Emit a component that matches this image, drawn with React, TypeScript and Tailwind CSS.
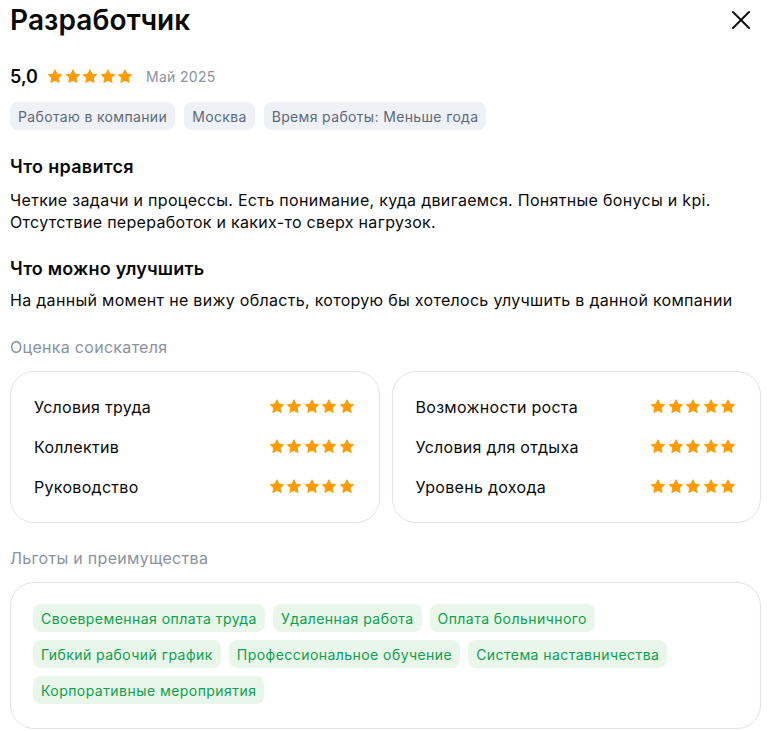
import { X } from "lucide-react";

const Star = () => (
  <svg width="16" height="15" viewBox="0 0 24 23" className="shrink-0">
    <path
      d="M12 1.2l3.1 6.6 7.2.9-5.3 5 1.4 7.1L12 17.3l-6.4 3.5 1.4-7.1-5.3-5 7.2-.9z"
      fill="#ff9a00"
      stroke="#ff9a00"
      strokeWidth="1.4"
      strokeLinejoin="round"
    />
  </svg>
);

const Stars = () => (
  <div className="flex items-center gap-[1.5px]">
    {[0, 1, 2, 3, 4].map((i) => (
      <Star key={i} />
    ))}
  </div>
);

const RatingCard = ({ rows }: { rows: string[] }) => (
  <div className="flex-1 rounded-[24px] border border-[#dfe4ec] px-[23px] pt-[24px] pb-[25px]">
    <div className="flex flex-col gap-[19px]">
      {rows.map((r) => (
        <div key={r} className="flex items-center justify-between h-[21px]">
          <span className="text-[16px] tracking-[0.3px] text-[#0a0a0a]">{r}</span>
          <div className="mr-[1px]">
            <Stars />
          </div>
        </div>
      ))}
    </div>
  </div>
);

const benefits = [
  "Своевременная оплата труда",
  "Удаленная работа",
  "Оплата больничного",
  "Гибкий рабочий график",
  "Профессиональное обучение",
  "Система наставничества",
  "Корпоративные мероприятия",
];

export default function App() {
  return (
    <div
      className="w-[771px] bg-white px-[10px] text-[#0a0a0a]"
      style={{ fontFamily: "Inter, 'Noto Sans', sans-serif" }}
    >
      {/* Header */}
      <div className="flex items-start justify-between pt-[2px]">
        <h1 className="text-[28px] font-semibold leading-[36px] tracking-[0.1px]">
          Разработчик
        </h1>
        <button className="mt-[2px] mr-[4px] text-[#111]">
          <X size={32} strokeWidth={1.5} />
        </button>
      </div>

      <div className="mt-[26px] flex items-center h-[24px]">
        <span className="text-[18px] font-semibold">5,0</span>
        <div className="ml-[9px]">
          <Stars />
        </div>
        <span className="ml-[13px] text-[14px] tracking-[0.3px] text-[#8a93a0]">Май 2025</span>
      </div>

      <div className="mt-[14px] flex gap-[9px]">
        {["Работаю в компании", "Москва", "Время работы: Меньше года"].map((t) => (
          <span
            key={t}
            className="rounded-[8px] bg-[#eef1f6] px-[8px] h-[28px] flex items-center text-[14px] tracking-[0.35px] text-[#5e6978]"
          >
            {t}
          </span>
        ))}
      </div>

      {/* Likes */}
      <h2 className="mt-[24px] text-[18px] font-semibold leading-[26px] tracking-[0.3px]">Что нравится</h2>
      <p className="mt-[9px] text-[16px] leading-[22px] tracking-[0.3px]">
        Четкие задачи и процессы. Есть понимание, куда двигаемся. Понятные бонусы и kpi.
        <br />
        Отсутствие переработок и каких-то сверх нагрузок.
      </p>

      <h2 className="mt-[23px] text-[18px] font-semibold leading-[26px] tracking-[0.2px]">
        Что можно улучшить
      </h2>
      <p className="mt-[7px] text-[16px] leading-[22px] tracking-[0.3px]">
        На данный момент не вижу область, которую бы хотелось улучшить в данной компании
      </p>

      {/* Ratings */}
      <div className="mt-[25px] text-[16px] leading-[22px] tracking-[0.3px] text-[#8a93a0]">
        Оценка соискателя
      </div>
      <div className="mt-[13px] flex gap-[12px]">
        <RatingCard rows={["Условия труда", "Коллектив", "Руководство"]} />
        <RatingCard rows={["Возможности роста", "Условия для отдыха", "Уровень дохода"]} />
      </div>

      {/* Benefits */}
      <div className="mt-[24px] text-[16px] leading-[22px] tracking-[0.3px] text-[#8a93a0]">
        Льготы и преимущества
      </div>
      <div className="mt-[13px] rounded-[24px] border border-[#dfe4ec] px-[22px] pt-[21px] pb-[24px]">
        <div className="flex flex-wrap gap-x-[8px] gap-y-[8px]">
          {benefits.map((b) => (
            <span
              key={b}
              className="rounded-[8px] bg-[#e8f7ea] px-[8px] h-[28px] flex items-center text-[14px] tracking-[0.45px] text-[#0e9f50]"
            >
              {b}
            </span>
          ))}
        </div>
      </div>
      <div className="h-[4px]" />
    </div>
  );
}
